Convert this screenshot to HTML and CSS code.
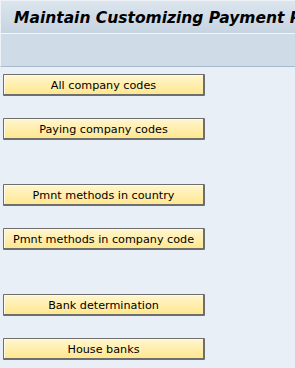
FILE: index.html
```html
<!DOCTYPE html>
<html lang="en">
<head>
  <meta charset="UTF-8" />
  <title>Maintain Customizing Payment Program</title>
  <link rel="stylesheet" href="styles.css">
</head>
<body>
  <div class="titleBar">
    <h1>Maintain Customizing Payment Program</h1>
  </div>
  <div class="toolBar"></div>

  <div class="content">
    <div class="group">
      <button>All company codes</button>
      <button>Paying company codes</button>
    </div>
    <div class="group">
      <button>Pmnt methods in country</button>
      <button>Pmnt methods in company code</button>
    </div>
    <div class="group">
      <button>Bank determination</button>
      <button>House banks</button>
    </div>
  </div>
</body>
</html>
```

FILE: styles.css
```css
/* SAP GUI style screen */
body, html {
  margin: 0; padding: 0; height: 100%;
  background: #e9eff6;
  font-family: 'DejaVu Sans', Verdana, sans-serif;
  overflow: hidden;
}
.titleBar {
  height: 32px;
  background: linear-gradient(#dce5ee, #c6d4e1);
  border-top: 1px solid #eef2f6;
  border-left: 1px solid #eef2f6;
  border-bottom: 1px solid #f4f7fa;
  display: flex;
  align-items: center;
  white-space: nowrap;
  overflow: hidden;
}
.titleBar h1 {
  margin: 1px 0 0 13px;
  font-size: 15.5px;
  font-weight: 700;
  font-style: italic;
  color: #000;
}
.toolBar {
  height: 32px;
  background: #cfdce8;
  border-left: 1px solid #eef2f6;
  border-bottom: 1px solid #a7b9ca;
}
.content {
  display: flex;
  flex-direction: column;
  gap: 44px;
  padding: 7px 0 0 3px;
}
.group {
  display: flex;
  flex-direction: column;
  gap: 22px;
}
button {
  width: 202px;
  height: 22px;
  padding: 1px 0 0;
  margin: 0;
  border: 1px solid #6e6e6e;
  border-right-width: 2px;
  border-bottom-width: 2px;
  border-radius: 1px;
  background: linear-gradient(#fff6cf, #ffe78f);
  box-shadow: inset 1px 1px 0 #fffbe8;
  font-family: 'DejaVu Sans', Verdana, sans-serif;
  font-size: 11.2px;
  color: #000;
  cursor: pointer;
}
```
